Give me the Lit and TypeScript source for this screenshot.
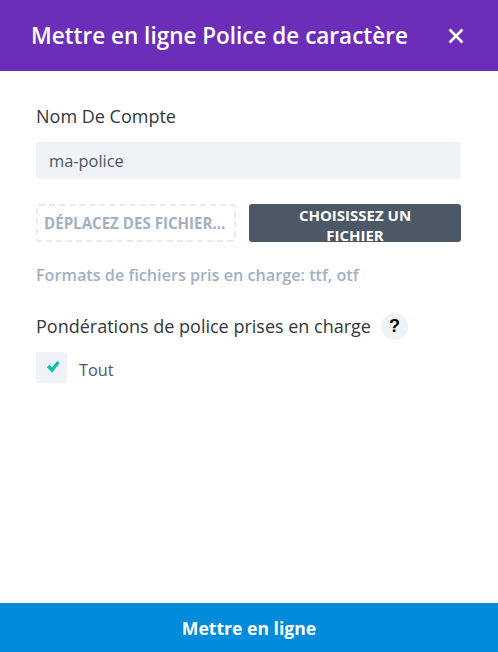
import { LitElement, html, css } from "lit";
import { customElement } from "lit/decorators.js";

@customElement("app-root")
export class AppRoot extends LitElement {
  static styles = css`
    :host {
      display: flex;
      flex-direction: column;
      width: 498px;
      height: 652px;
      background: #fff;
      font-family: "Open Sans", sans-serif;
      color: #32373c;
      overflow: hidden;
    }
    .header {
      height: 71px;
      flex: none;
      box-sizing: border-box;
      background: #6c2eb9;
      color: #fff;
      display: flex;
      align-items: center;
      justify-content: space-between;
      padding: 0 34px 0 31px;
    }
    .title {
      font-size: 22.5px;
      font-weight: 600;
      line-height: 30px;
      margin: 0;
    }
    .close {
      display: block;
      width: 16px;
      height: 16px;
    }
    .body {
      flex: 1;
      padding: 33px 37px 0 36px;
      display: flex;
      flex-direction: column;
    }
    .label {
      font-size: 18px;
      font-weight: 500;
      line-height: 25px;
      color: #32373c;
    }
    .input {
      margin-top: 13px;
      height: 37px;
      box-sizing: border-box;
      background: #eff2f7;
      border-radius: 3px;
      padding: 0 13px;
      display: flex;
      align-items: center;
      font-size: 16.4px;
      font-weight: 500;
      color: #4c5866;
    }
    .files {
      margin-top: 25px;
      display: flex;
      gap: 13px;
      height: 38px;
    }
    .drop {
      width: 200px;
      box-sizing: border-box;
      border: 2px dashed #e6ebf3;
      border-radius: 3px;
      display: flex;
      align-items: center;
      padding-left: 6px;
      font-size: 15.1px;
      font-weight: 700;
      color: #a3b0c2;
      text-transform: uppercase;
      white-space: nowrap;
    }
    .choose {
      flex: 1;
      background: #4c5866;
      border-radius: 3px;
      color: #fff;
      font-size: 15px;
      font-weight: 700;
      line-height: 20px;
      text-align: center;
      text-transform: uppercase;
      padding: 1px 30px 0;
    }
    .help {
      margin-top: 22px;
      font-size: 16.2px;
      font-weight: 600;
      line-height: 22px;
      color: #a3b0c2;
    }
    .weights {
      margin-top: 27px;
      display: flex;
      align-items: center;
      gap: 10px;
    }
    .q {
      width: 27px;
      height: 27px;
      border-radius: 50%;
      background: #eff2f7;
      display: flex;
      align-items: center;
      justify-content: center;
      font-family: "Liberation Sans", sans-serif;
      font-size: 18px;
      font-weight: 700;
      color: #000;
    }
    .option {
      margin-top: 12px;
      display: flex;
      align-items: center;
      gap: 12px;
      font-size: 16.3px;
      font-weight: 500;
      color: #4c5866;
    }
    .box {
      width: 31px;
      height: 31px;
      border-radius: 3px;
      background: #eff2f7;
      display: block;
    }
    .option span {
      position: relative;
      top: 2px;
    }
    .submit {
      flex: none;
      height: 49px;
      background: #008bdb;
      color: #fff;
      display: flex;
      align-items: center;
      justify-content: center;
      font-size: 17.6px;
      font-weight: 700;
    }
  `;

  render() {
    return html`
      <div class="header">
        <h1 class="title">Mettre en ligne Police de caractère</h1>
        <svg class="close" viewBox="0 0 16 16" fill="none" stroke="#fff" stroke-width="2.6">
          <path d="M1.5 1.5 14.5 14.5M14.5 1.5 1.5 14.5"></path>
        </svg>
      </div>
      <div class="body">
        <div class="label">Nom De Compte</div>
        <div class="input">ma-police</div>
        <div class="files">
          <div class="drop">Déplacez des fichier...</div>
          <div class="choose">Choisissez un fichier</div>
        </div>
        <div class="help">Formats de fichiers pris en charge: ttf, otf</div>
        <div class="weights">
          <span class="label">Pondérations de police prises en charge</span>
          <span class="q">?</span>
        </div>
        <div class="option">
          <svg class="box" viewBox="0 0 31 31" fill="none">
            <path d="M12 14 16 18 22.5 10" stroke="#00c3aa" stroke-width="3.2"></path>
          </svg>
          <span>Tout</span>
        </div>
      </div>
      <div class="submit">Mettre en ligne</div>
    `;
  }
}
